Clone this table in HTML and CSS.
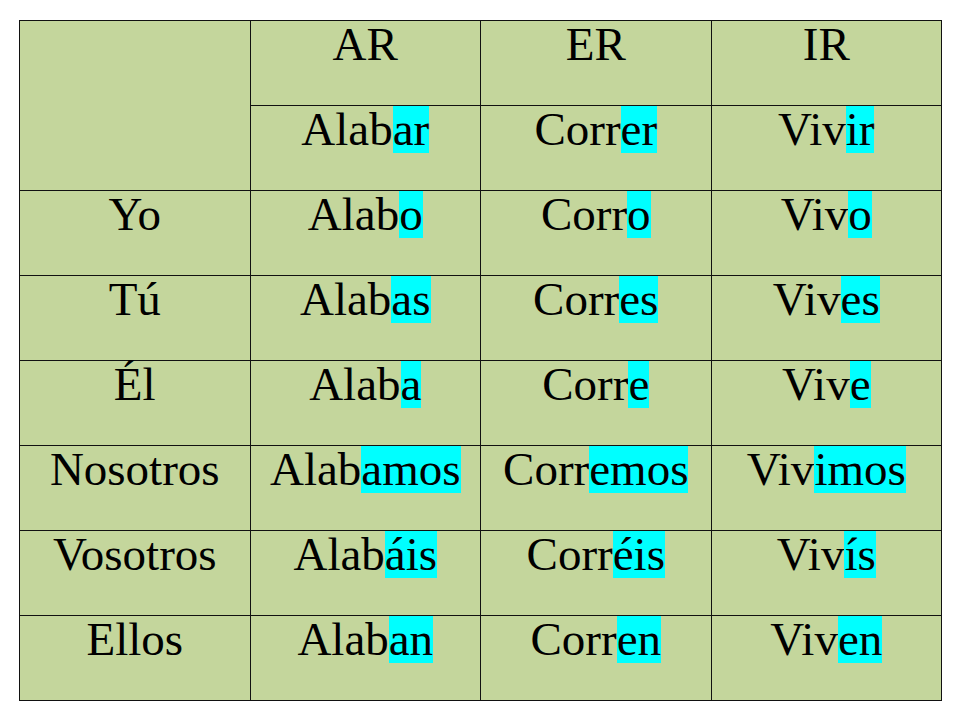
FILE: index.html
```html
<!DOCTYPE html>
<html>
<head>
<meta charset="utf-8">
<link rel="stylesheet" href="styles.css">
</head>
<body>
<table class="conj">
  <tr>
    <td class="cell" rowspan="2"></td>
    <td class="cell">AR</td>
    <td class="cell">ER</td>
    <td class="cell">IR</td>
  </tr>
  <tr>
    <td class="cell">Alab<span class="hl">ar</span></td>
    <td class="cell">Corr<span class="hl">er</span></td>
    <td class="cell">Viv<span class="hl">ir</span></td>
  </tr>
  <tr>
    <td class="cell">Yo</td>
    <td class="cell">Alab<span class="hl">o</span></td>
    <td class="cell">Corr<span class="hl">o</span></td>
    <td class="cell">Viv<span class="hl">o</span></td>
  </tr>
  <tr>
    <td class="cell">Tú</td>
    <td class="cell">Alab<span class="hl">as</span></td>
    <td class="cell">Corr<span class="hl">es</span></td>
    <td class="cell">Viv<span class="hl">es</span></td>
  </tr>
  <tr>
    <td class="cell">Él</td>
    <td class="cell">Alab<span class="hl">a</span></td>
    <td class="cell">Corr<span class="hl">e</span></td>
    <td class="cell">Viv<span class="hl">e</span></td>
  </tr>
  <tr>
    <td class="cell">Nosotros</td>
    <td class="cell">Alab<span class="hl">amos</span></td>
    <td class="cell">Corr<span class="hl">emos</span></td>
    <td class="cell">Viv<span class="hl">imos</span></td>
  </tr>
  <tr>
    <td class="cell">Vosotros</td>
    <td class="cell">Alab<span class="hl">áis</span></td>
    <td class="cell">Corr<span class="hl">éis</span></td>
    <td class="cell">Viv<span class="hl">ís</span></td>
  </tr>
  <tr>
    <td class="cell">Ellos</td>
    <td class="cell">Alab<span class="hl">an</span></td>
    <td class="cell">Corr<span class="hl">en</span></td>
    <td class="cell">Viv<span class="hl">en</span></td>
  </tr>
</table>
</body>
</html>
```
FILE: styles.css
```css
html, body {
  margin: 0;
  padding: 0;
  background: #ffffff;
}
body {
  padding: 20px 0 0 19px;
}
.conj {
  border-collapse: collapse;
  table-layout: fixed;
  width: 923px;
  background: #c4d69c;
  font-family: "Liberation Serif", "Times New Roman", serif;
  font-size: 47px;
  color: #000;
}
.cell {
  height: 84px;
  border: 1px solid #111;
  padding: 0;
  text-align: center;
  vertical-align: top;
  line-height: 46px;
  white-space: nowrap;
}
.hl {
  display: inline-block;
  height: 47px;
  line-height: 46px;
  background: #00ffff;
  vertical-align: top;
}
```
